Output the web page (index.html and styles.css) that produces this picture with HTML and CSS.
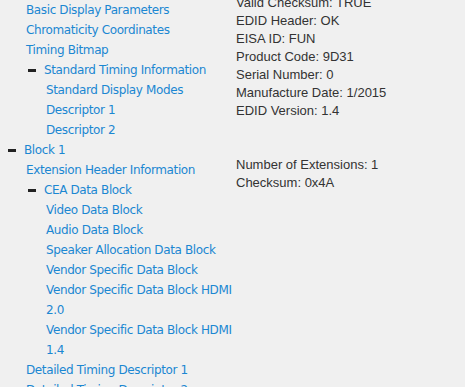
FILE: index.html
```html
<!DOCTYPE html>
<html lang="en">
<head>
    <meta charset="UTF-8">
    <title>EDID Viewer</title>
    <link rel="stylesheet" href="styles.css">
</head>
<body>
    <div class="layout">
        <ul class="tree">
            <li class="leaf"><a href="#">Basic Display Parameters</a></li>
            <li class="leaf"><a href="#">Chromaticity Coordinates</a></li>
            <li class="leaf"><a href="#">Timing Bitmap</a></li>
            <li class="node">
                <span class="toggle"></span><a href="#">Standard Timing Information</a>
                <ul>
                    <li class="leaf"><a href="#">Standard Display Modes</a></li>
                    <li class="leaf"><a href="#">Descriptor 1</a></li>
                    <li class="leaf"><a href="#">Descriptor 2</a></li>
                </ul>
            </li>
        </ul>

        <ul class="tree root">
            <li class="node">
                <span class="toggle"></span><a href="#">Block 1</a>
                <ul>
                    <li class="leaf"><a href="#">Extension Header Information</a></li>
                    <li class="node">
                        <span class="toggle"></span><a href="#">CEA Data Block</a>
                        <ul>
                            <li class="leaf"><a href="#">Video Data Block</a></li>
                            <li class="leaf"><a href="#">Audio Data Block</a></li>
                            <li class="leaf"><a href="#">Speaker Allocation Data Block</a></li>
                            <li class="leaf"><a href="#">Vendor Specific Data Block</a></li>
                            <li class="leaf"><a href="#">Vendor Specific Data Block HDMI 2.0</a></li>
                            <li class="leaf"><a href="#">Vendor Specific Data Block HDMI 1.4</a></li>
                        </ul>
                    </li>
                    <li class="leaf"><a href="#">Detailed Timing Descriptor 1</a></li>
                    <li class="leaf"><a href="#">Detailed Timing Descriptor 2</a></li>
                </ul>
            </li>
        </ul>

        <div class="details">
            <div class="info">
                <p>Valid Checksum: TRUE</p>
                <p>EDID Header: OK</p>
                <p>EISA ID: FUN</p>
                <p>Product Code: 9D31</p>
                <p>Serial Number: 0</p>
                <p>Manufacture Date: 1/2015</p>
                <p>EDID Version: 1.4</p>
            </div>
            <div class="info ext">
                <p>Number of Extensions: 1</p>
                <p>Checksum: 0x4A</p>
            </div>
        </div>
    </div>
</body>
</html>
```

FILE: styles.css
```css
html {
    overflow: hidden;
}

body {
    margin: 0 8px;
    background: #f0f0f0;
}

.layout {
    display: grid;
    grid-template-columns: 228px 1fr;
    grid-template-rows: auto auto 1fr;
}

.tree {
    grid-column: 1;
    width: 232px;
    box-sizing: border-box;
    list-style: none;
    margin: 0;
    padding: 0 0 0 20px;
    font-family: "DejaVu Sans", Verdana, sans-serif;
    font-size: 12px;
    letter-spacing: -0.38px;
    line-height: 20px;
}

.tree.root {
    padding-left: 0;
}

.tree ul {
    list-style: none;
    margin: 0;
    padding: 0 0 0 20px;
}

.tree li.leaf {
    margin-left: -2px;
}

.tree li.node {
    display: flex;
    flex-wrap: wrap;
    align-items: center;
}

.tree li.node > ul {
    flex-basis: 100%;
}

.tree a {
    color: #1b87d2;
    text-decoration: none;
}

.toggle {
    display: inline-block;
    width: 8px;
    height: 3px;
    margin-right: 8px;
    background: #222;
}

.details {
    grid-column: 2;
    grid-row: 1 / 4;
    margin-top: -6px;
    font-family: "Liberation Sans", Arial, sans-serif;
    font-size: 13px;
    line-height: 18px;
    color: #333;
}

.info p {
    margin: 0;
}

.info.ext {
    margin-top: 36px;
}
```
